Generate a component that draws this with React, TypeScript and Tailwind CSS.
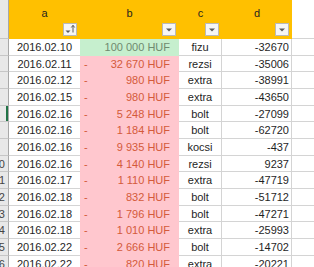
type Row = {
  date: string;
  amount: string;
  good: boolean;
  cat: string;
  bal: string;
};

const rows: Row[] = [
  { date: "2016.02.10", amount: "100 000 HUF", good: true, cat: "fizu", bal: "-32670" },
  { date: "2016.02.11", amount: "32 670 HUF", good: false, cat: "rezsi", bal: "-35006" },
  { date: "2016.02.12", amount: "980 HUF", good: false, cat: "extra", bal: "-38991" },
  { date: "2016.02.15", amount: "980 HUF", good: false, cat: "extra", bal: "-43650" },
  { date: "2016.02.16", amount: "5 248 HUF", good: false, cat: "bolt", bal: "-27099" },
  { date: "2016.02.16", amount: "1 184 HUF", good: false, cat: "bolt", bal: "-62720" },
  { date: "2016.02.16", amount: "9 935 HUF", good: false, cat: "kocsi", bal: "-437" },
  { date: "2016.02.16", amount: "4 140 HUF", good: false, cat: "rezsi", bal: "9237" },
  { date: "2016.02.17", amount: "1 110 HUF", good: false, cat: "extra", bal: "-47719" },
  { date: "2016.02.18", amount: "832 HUF", good: false, cat: "bolt", bal: "-51712" },
  { date: "2016.02.18", amount: "1 796 HUF", good: false, cat: "bolt", bal: "-47271" },
  { date: "2016.02.18", amount: "1 010 HUF", good: false, cat: "extra", bal: "-25993" },
  { date: "2016.02.22", amount: "2 666 HUF", good: false, cat: "bolt", bal: "-14702" },
  { date: "2016.02.22", amount: "820 HUF", good: false, cat: "extra", bal: "-20221" },
];

const FilterButton = ({ sorted }: { sorted?: boolean }) => (
  <div className="w-[14px] h-[13px] border border-[#b9b9b9] bg-[#f6f6f6] flex items-center justify-center">
    {sorted ? (
      <svg width="12" height="11" viewBox="0 0 12 11">
        <path d="M1.5 6.5 H6.5 L4 9 Z" fill="#5a5a5a" />
        <path d="M9 1.5 V8.5" stroke="#5a5a5a" strokeWidth="1" />
        <path d="M7.3 3.5 L9 1.3 L10.7 3.5" stroke="#5a5a5a" strokeWidth="1" fill="none" />
      </svg>
    ) : (
      <svg width="8" height="6" viewBox="0 0 8 6">
        <path d="M1 1.5 H7 L4 4.5 Z" fill="#5a5a5a" />
      </svg>
    )}
  </div>
);

const HeaderCell = ({ label, width, sorted }: { label: string; width: string; sorted?: boolean }) => (
  <div className={`${width} h-full flex flex-col items-center pt-[5px]`}>
    <span className="leading-[16px] text-[#1f1f1f]">{label}</span>
    <div className="mt-auto mb-[3px] self-end mr-[3px]">
      <FilterButton sorted={sorted} />
    </div>
  </div>
);

export default function App() {
  return (
    <div className="w-[314px] h-[267px] overflow-hidden bg-white font-['Liberation_Sans',Arial,sans-serif] text-[11px] text-[#1f1f1f]">
      <div className="flex h-[39px]">
        <div className="w-[9px] h-full bg-[#e8e8e8] border-r border-b border-r-[#a8a8a8] border-b-[#c6c6c6]" />
        <div className="flex h-full bg-[#ffc000]">
          <HeaderCell label="a" width="w-[71px]" sorted />
          <HeaderCell label="b" width="w-[99px]" />
          <HeaderCell label="c" width="w-[43px]" />
          <HeaderCell label="d" width="w-[70px]" />
        </div>
        <div className="flex-1 h-full border-b border-[#d4d4d4]" />
      </div>
      {rows.map((r, i) => {
        const num = i + 3;
        const selected = i === 4;
        return (
          <div key={i} className="flex h-[16.67px] leading-[16.67px] whitespace-nowrap">
            <div
              className={`w-[9px] h-full bg-[#e8e8e8] border-r border-b border-r-[#a8a8a8] border-b-[#c6c6c6] overflow-hidden flex justify-end pr-[3px] text-[#444] ${
                selected ? "shadow-[inset_-2px_0_0_#217346]" : ""
              }`}
            >
              <span>{num >= 10 ? num : ""}</span>
            </div>
            <div className="w-[71px] h-full border-b border-[#d4d4d4] text-center">{r.date}</div>
            <div
              className={`w-[99px] h-full flex justify-between pl-[4px] pr-[9px] ${
                r.good ? "bg-[#c6efce] text-[#6f8a6f]" : "bg-[#ffc7ce] text-[#d45a3a]"
              }`}
            >
              <span>{r.good ? "" : "-"}</span>
              <span>{r.amount}</span>
            </div>
            <div className="w-[43px] h-full border-r border-b border-[#d4d4d4] text-center">{r.cat}</div>
            <div className="w-[70px] h-full border-r border-b border-[#d4d4d4] text-right pr-[2px]">{r.bal}</div>
            <div className="flex-1 h-full border-b border-[#d4d4d4]" />
          </div>
        );
      })}
    </div>
  );
}
